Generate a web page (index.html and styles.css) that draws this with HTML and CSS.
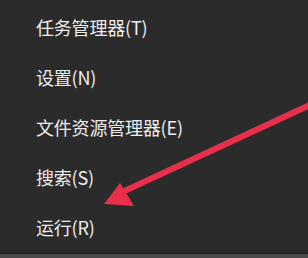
FILE: index.html
```html
<!DOCTYPE html>
<html>
<head>
  <title>Win+X 菜单</title>
  <link rel="stylesheet" href="styles.css">
</head>
<body>
  <div class="menu">
    <div class="item">任务管理器(T)</div>
    <div class="item">设置(N)</div>
    <div class="item">文件资源管理器(E)</div>
    <div class="item">搜索(S)</div>
    <div class="item">运行(R)</div>
  </div>
  <div class="bottom-bar"></div>

  <svg class="arrow" width="308" height="258" viewBox="0 0 308 258">
    <line x1="312" y1="104" x2="118" y2="194" stroke="#e8304c" stroke-width="6" stroke-linecap="round"/>
    <polygon points="104,204 120,183 134,206" fill="#e8304c"/>
  </svg>
</body>
</html>
```

FILE: styles.css
```css
body {
  margin: 0;
  width: 308px;
  height: 258px;
  overflow: hidden;
  background-color: #2b2b2b;
  font-family: "Noto Sans CJK SC", "Noto Sans", sans-serif;
}

.menu {
  padding-top: 2px;
  height: 251px;
}

.item {
  height: 50px;
  display: flex;
  align-items: center;
  padding-left: 36px;
  color: #eeeeee;
  font-size: 18px;
  letter-spacing: -0.2px;
}

.bottom-bar {
  height: 5px;
  border-top: 1px solid #202020;
  background-color: #4a4a4a;
}

.arrow {
  position: absolute;
  left: 0;
  top: 0;
}
```
